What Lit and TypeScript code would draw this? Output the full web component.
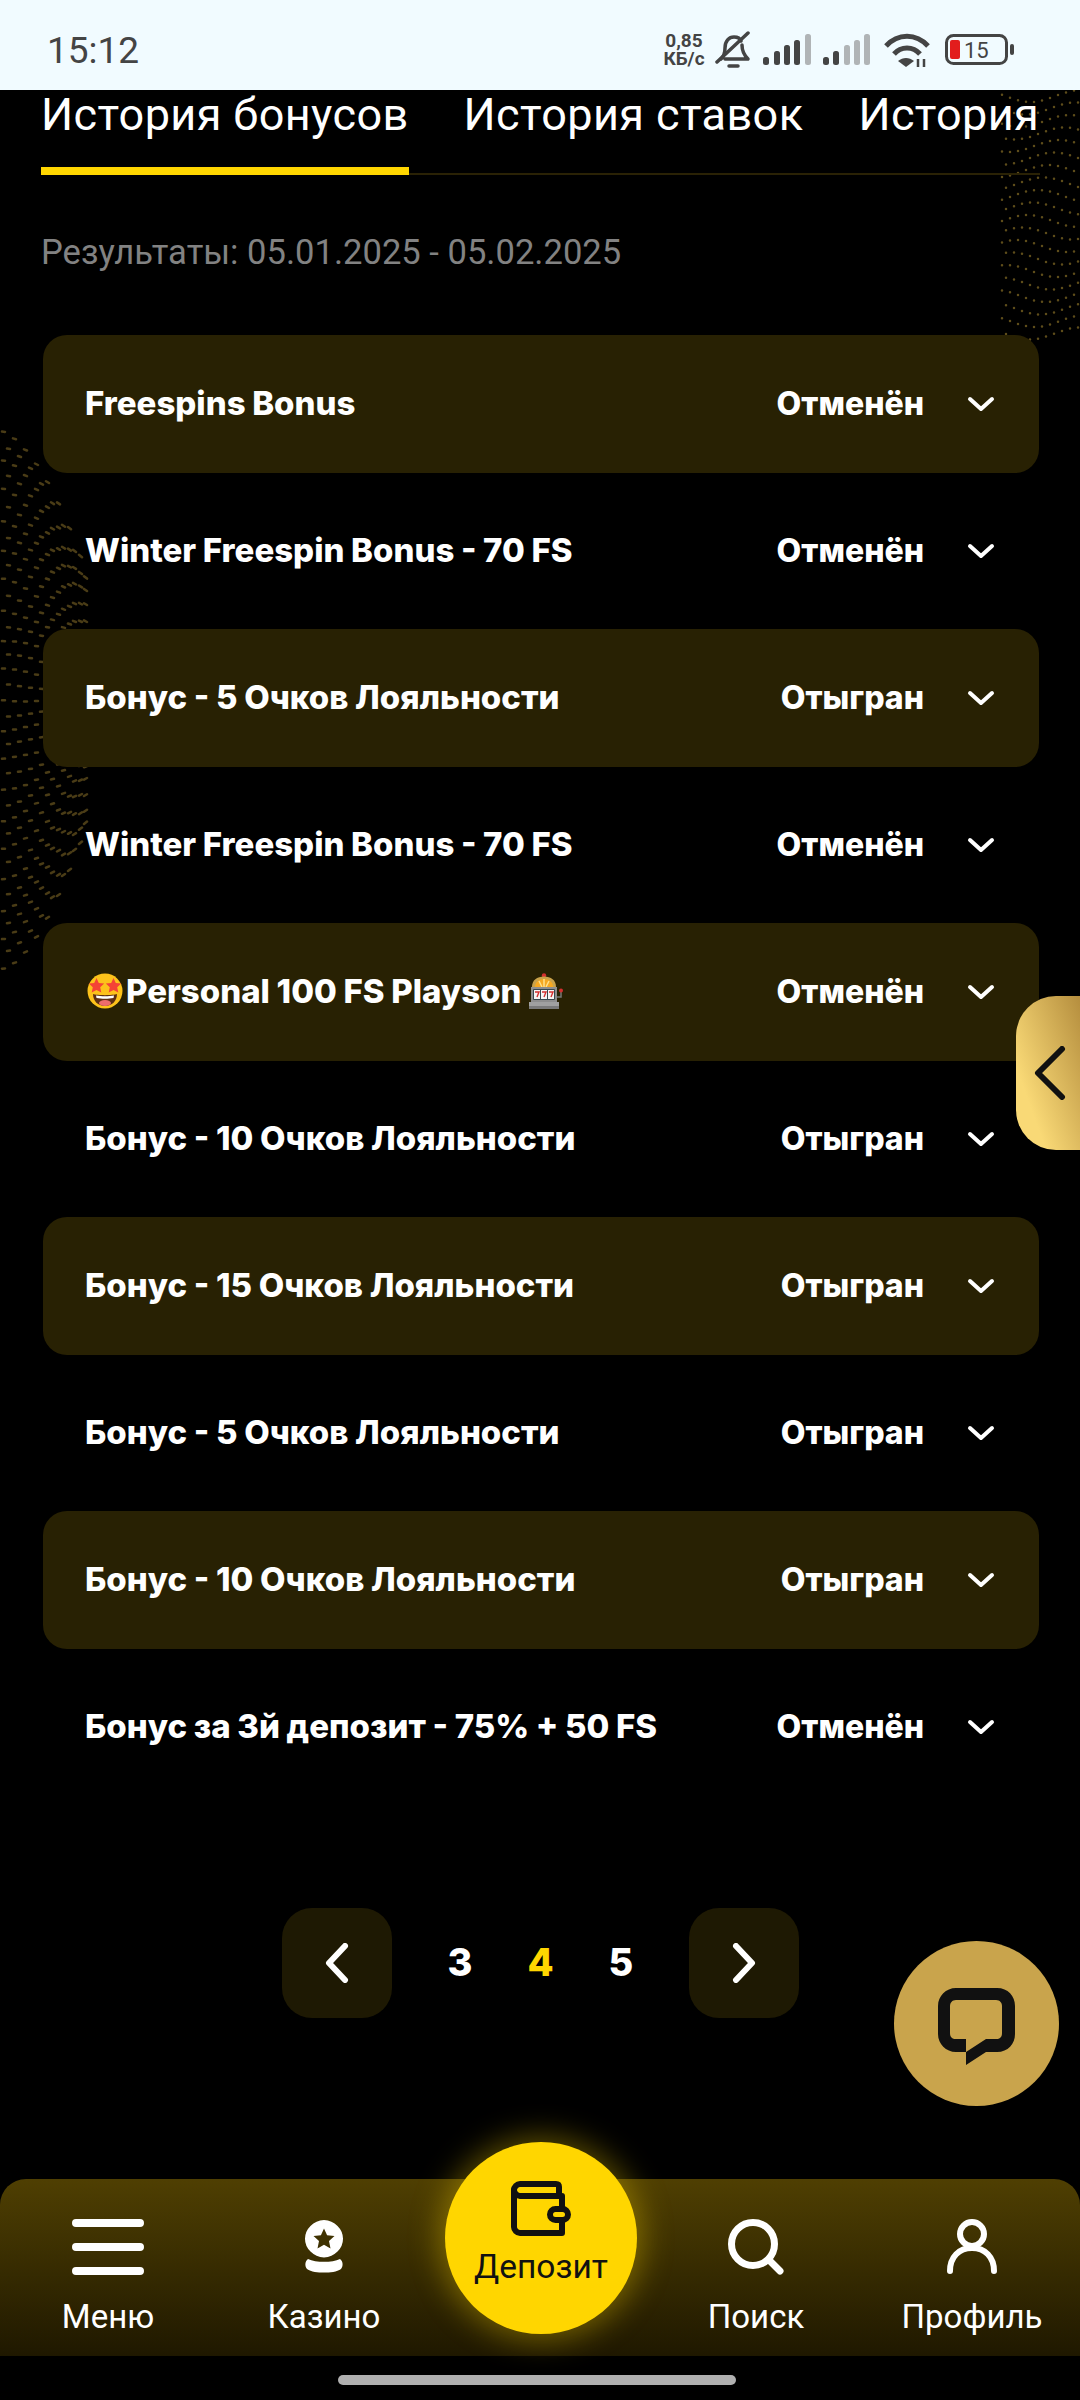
import { LitElement, html, css, svg } from "lit";
import { customElement } from "lit/decorators.js";

type Row = { title: string; status: string; emoji?: boolean };

const rows: Row[] = [
    { title: "Freespins Bonus", status: "Отменён" },
    { title: "Winter Freespin Bonus - 70 FS", status: "Отменён" },
    { title: "Бонус - 5 Очков Лояльности", status: "Отыгран" },
    { title: "Winter Freespin Bonus - 70 FS", status: "Отменён" },
    { title: "Personal 100 FS Playson", status: "Отменён", emoji: true },
    { title: "Бонус - 10 Очков Лояльности", status: "Отыгран" },
    { title: "Бонус - 15 Очков Лояльности", status: "Отыгран" },
    { title: "Бонус - 5 Очков Лояльности", status: "Отыгран" },
    { title: "Бонус - 10 Очков Лояльности", status: "Отыгран" },
    { title: "Бонус за 3й депозит - 75% + 50 FS", status: "Отменён" },
];

// dotted sphere on the left edge: rows fan out at x=0 and pinch towards x=85
function leftDots() {
    let d = "";
    for (let k = -18; k <= 18; k++) {
        const t = k / 18;
        for (let x = 2 + (k & 1) * 5; x < 86; x += 11) {
            const y0 = 700 + t * 270;
            const y = y0 - t * Math.pow(x / 85, 1.6) * 140 + Math.sin(x / 14 + k) * 1.5;
            const slope = -t * 1.6 * Math.pow(x / 85, 0.6) * 1.6;
            d += `M${x} ${y.toFixed(1)}l3 ${slope.toFixed(1)}`;
        }
    }
    return d;
}

// wavy dotted rows on the right edge under the tabs
function rightDots() {
    let d = "";
    for (let k = 0; k < 20; k++) {
        for (let x = 1002 + (k & 1) * 4; x < 1080; x += 8) {
            const y = 96 + k * 12.5 + Math.sin(x / 16 + k / 3) * 6;
            d += `M${x} ${y.toFixed(1)}h.01`;
        }
    }
    return d;
}

const chevronDown = html`<svg class="chev" width="28" height="16" viewBox="0 0 28 16">
    <path d="M3 3l11 10L25 3" fill="none" stroke="#fff" stroke-width="4" stroke-linecap="round" stroke-linejoin="round" />
</svg>`;

const faceEmoji = html`<svg class="emoji face" width="38" height="36" viewBox="0 0 38 36">
    <circle cx="19" cy="18" r="17.5" fill="#fcc21b" />
    <path d="M7 21c4 1.500 20 1.500 24 0 0 7-5 12-12 12S7 28 7 21z" fill="#5d2f12" />
    <path d="M10 22.500c5 1 13 1 18 0l-.5 2.500c-5 1-12 1-17 0z" fill="#fff" />
    <ellipse cx="19" cy="30" rx="6" ry="3" fill="#ed6c6c" />
    <path d="M10.500 5l2.300 5 5.400.6-4 3.700 1.100 5.300-4.800-2.700-4.800 2.700 1.100-5.300-4-3.700 5.400-.6z" fill="#f44336" />
    <path d="M27.500 5l2.300 5 5.400.6-4 3.700 1.100 5.300-4.800-2.700-4.800 2.700 1.100-5.300-4-3.700 5.400-.6z" fill="#f44336" />
</svg>`;

const slotEmoji = html`<svg class="emoji" width="38" height="37" viewBox="0 0 38 37">
    <circle cx="16" cy="2.500" r="2.200" fill="#d32f2f" />
    <path d="M4 14C4 7 9 3.500 16 3.500S28 7 28 14z" fill="#c9a24a" />
    <path d="M7 14c0-5 4-8 9-8s9 3 9 8z" fill="#f6a821" />
    <path d="M16 6v8M11 8l3 6M21 8l-3 6" stroke="#ffe08a" stroke-width="1.500" />
    <rect x="3" y="14" width="26" height="15" fill="#8e8e8e" />
    <rect x="5" y="16" width="22" height="11" rx="1" fill="#37474f" />
    <rect x="6" y="17" width="6" height="9" fill="#f5f5f5" />
    <rect x="13" y="17" width="6" height="9" fill="#f5f5f5" />
    <rect x="20" y="17" width="6" height="9" fill="#f5f5f5" />
    <path d="M7 19h4l-2 5M14 19h4l-2 5M21 19h4l-2 5" fill="none" stroke="#d32f2f" stroke-width="1.400" />
    <path d="M29 24h4v-5" fill="none" stroke="#777" stroke-width="1.500" />
    <circle cx="33" cy="17.500" r="2" fill="#d32f2f" />
    <rect x="1" y="29" width="30" height="7" fill="#a0a0a0" />
    <rect x="1" y="33" width="30" height="3" fill="#7a7a7a" />
</svg>`;

@customElement("app-root")
export class AppRoot extends LitElement {
    static styles = css`
        :host {
            display: block;
            font-family: Roboto, sans-serif;
            color: #fff;
        }

        .page {
            position: relative;
            display: flex;
            flex-direction: column;
            height: 2400px;
            background: #000;
            overflow: hidden;
        }

        .dots {
            position: absolute;
            left: 0;
            top: 0;
        }

        .statusbar {
            position: relative;
            display: flex;
            align-items: center;
            justify-content: space-between;
            height: 90px;
            flex: none;
            padding: 0 66px 0 47px;
            box-sizing: border-box;
            background: #f1fbff;
            color: #444;
        }

        .time {
            font-size: 37px;
            line-height: 1;
            margin-top: 10px;
        }

        .sys {
            display: flex;
            align-items: center;
            margin-top: 10px;
        }

        .speed {
            font-size: 19px;
            font-weight: 700;
            line-height: 18px;
            text-align: center;
            width: 42px;
            margin-right: 10px;
        }

        .sys svg {
            display: block;
        }

        .tabs {
            position: relative;
            display: flex;
            gap: 55px;
            margin: 0 40px 0 41px;
            height: 85px;
            flex: none;
            font-size: 45px;
            letter-spacing: 0.4px;
            line-height: 50px;
            white-space: nowrap;
            box-shadow: inset 0 -2px 0 #2a2205;
        }

        .tab {
            flex: none;
            height: 85px;
            box-sizing: border-box;
        }

        .tab.active {
            border-bottom: 8px solid #ffd600;
        }

        .results {
            position: relative;
            margin: 57px 0 0 41px;
            font-size: 34.6px;
            line-height: 40px;
            color: #828282;
        }

        .list {
            position: relative;
            display: grid;
            grid-auto-rows: 138px;
            row-gap: 9px;
            margin: 63px 41px 0 43px;
        }

        .row {
            display: flex;
            align-items: center;
            padding: 0 44px 2px 42px;
            box-sizing: border-box;
            border-radius: 24px;
            font-family: Inter, sans-serif;
            font-weight: 800;
            font-size: 32px;
        }

        .row:nth-child(odd) {
            background: #282103;
        }

        .title {
            display: flex;
            align-items: center;
            flex: 1;
            min-width: 0;
            font-size: 33px;
            word-spacing: -0.6px;
        }

        .emoji {
            flex: none;
        }

        .face {
            margin: 0 2px 0 1px;
        }

        .status {
            margin-right: 43px;
        }

        .chev {
            display: block;
            margin-top: 2px;
        }

        .pager {
            position: relative;
            display: flex;
            align-items: center;
            margin: 112px 0 0 282px;
        }

        .page-btn {
            display: flex;
            align-items: center;
            justify-content: center;
            width: 110px;
            height: 110px;
            border-radius: 30px;
            background: #1e1903;
        }

        .nums {
            display: grid;
            grid-template-columns: 81px 80px 81px;
            justify-items: center;
            width: 297px;
            justify-content: center;
            padding-bottom: 3px;
            font-family: Inter, sans-serif;
            font-weight: 800;
            font-size: 38px;
        }

        .nums .on {
            color: #ffd600;
        }

        .nav {
            position: relative;
            display: grid;
            grid-template-columns: repeat(5, 216px);
            height: 177px;
            margin-top: auto;
            flex: none;
            border-radius: 26px 26px 0 0;
            background: linear-gradient(#4f3f02, #1f1800);
        }

        .item {
            display: flex;
            flex-direction: column;
            align-items: center;
            padding-top: 40px;
            box-sizing: border-box;
            font-size: 33px;
            line-height: 40px;
        }

        .item svg {
            display: block;
            height: 56px;
            margin-bottom: 22px;
        }

        .home {
            display: flex;
            justify-content: center;
            align-items: center;
            height: 44px;
            flex: none;
        }

        .home i {
            display: block;
            width: 398px;
            height: 10px;
            margin-top: 4px;
            margin-left: -6px;
            border-radius: 5px;
            background: #b0b0b0;
        }

        .deposit {
            position: absolute;
            left: 445px;
            top: -37px;
            display: flex;
            flex-direction: column;
            align-items: center;
            width: 192px;
            height: 192px;
            padding-top: 39px;
            box-sizing: border-box;
            border-radius: 50%;
            background: #ffd600;
            box-shadow: 0 0 30px 6px rgba(255, 214, 0, 0.35);
            color: #111;
            font-size: 33.5px;
            line-height: 40px;
        }

        .deposit svg {
            display: block;
            margin-bottom: 11px;
        }

        .chat {
            position: absolute;
            left: 894px;
            top: 1941px;
            display: flex;
            align-items: center;
            justify-content: center;
            width: 165px;
            height: 165px;
            border-radius: 50%;
            background: #c9a44c;
        }

        .chat svg {
            margin-top: 5px;
        }

        .side {
            position: absolute;
            right: 0;
            top: 996px;
            display: flex;
            align-items: center;
            width: 64px;
            height: 154px;
            padding-left: 18px;
            box-sizing: border-box;
            border-radius: 40px 0 0 40px;
            background: linear-gradient(70deg, #f9d976 25%, #b58e3e);
        }
    `;

    render() {
        return html`
            <div class="page">
                <svg class="dots" width="1080" height="1000" fill="none" stroke-linecap="round">
                    ${svg`<path d=${leftDots()} stroke="#4a3c16" stroke-width="2.500" />`}
                    ${svg`<path d=${rightDots()} stroke="#5e4d1a" stroke-width="2.500" />`}
                </svg>
                ${this.renderStatusBar()}
                <div class="tabs">
                    <div class="tab active">История бонусов</div>
                    <div class="tab">История ставок</div>
                    <div class="tab">История</div>
                </div>
                <div class="results">Результаты: 05.01.2025 - 05.02.2025</div>
                <div class="list">
                    ${rows.map(
                        (r) => html`
                            <div class="row">
                                <div class="title">
                                    ${r.emoji ? faceEmoji : ""}${r.title}${r.emoji
                                        ? html`&nbsp;${slotEmoji}`
                                        : ""}
                                </div>
                                <div class="status">${r.status}</div>
                                ${chevronDown}
                            </div>
                        `
                    )}
                </div>
                <div class="pager">
                    <div class="page-btn">
                        <svg width="26" height="40" viewBox="0 0 26 40">
                            <path d="M21 3L5 20l16 17" fill="none" stroke="#fff" stroke-width="6" stroke-linecap="round" stroke-linejoin="round" />
                        </svg>
                    </div>
                    <div class="nums"><span>3</span><span class="on">4</span><span>5</span></div>
                    <div class="page-btn">
                        <svg width="26" height="40" viewBox="0 0 26 40">
                            <path d="M5 3l16 17L5 37" fill="none" stroke="#fff" stroke-width="6" stroke-linecap="round" stroke-linejoin="round" />
                        </svg>
                    </div>
                </div>
                ${this.renderNav()}
                <div class="home"><i></i></div>
                <div class="chat">
                    <svg width="77" height="77" viewBox="0 0 77 77">
                        <path d="M18 0h41c11 0 18 8 18 18v28c0 10-7 18-18 18H48L28 77V64H18C8 64 0 56 0 46V18C0 8 8 0 18 0z" fill="#111" />
                        <path d="M18 12h40c4 0 6 3 6 6v27c0 4-2 6-6 6H48L28 64V51H18c-4 0-6-2-6-6V18c0-3 2-6 6-6z" fill="#c9a44c" />
                    </svg>
                </div>
                <div class="side">
                    <svg width="32" height="54" viewBox="0 0 32 54">
                        <path d="M28 3L4 27l24 24" fill="none" stroke="#111" stroke-width="6" stroke-linecap="round" stroke-linejoin="round" />
                    </svg>
                </div>
            </div>
        `;
    }

    renderStatusBar() {
        return html`
            <div class="statusbar">
                <div class="time">15:12</div>
                <div class="sys">
                    <div class="speed">0,85<br />КБ/с</div>
                    <svg width="36" height="38" viewBox="0 0 36 38" fill="none" stroke="#444" stroke-width="3.500" stroke-linecap="round" stroke-linejoin="round">
                        <path d="M6 28c3-3 4-6 4-11 0-7 4-11 9-11 3 0 6 1 7 4M27 14c0 5 2 10 6 14H10" />
                        <path d="M2 31L33 2" />
                        <path d="M14 35h9" />
                    </svg>
                    <svg style="margin-left:12px" width="48" height="32" viewBox="0 0 48 32">
                        <rect x="0" y="23" width="6" height="8" rx="2.500" fill="#444" />
                        <rect x="11" y="17" width="6" height="14" rx="2.500" fill="#444" />
                        <rect x="21" y="11" width="6" height="20" rx="2.500" fill="#444" />
                        <rect x="31" y="6" width="6" height="25" rx="2.500" fill="#444" />
                        <rect x="42" y="0" width="6" height="31" rx="2.500" fill="#b0b4b6" />
                    </svg>
                    <svg style="margin-left:12px" width="47" height="32" viewBox="0 0 47 32">
                        <rect x="0" y="23" width="6" height="8" rx="2.500" fill="#444" />
                        <rect x="10" y="17" width="6" height="14" rx="2.500" fill="#444" />
                        <rect x="21" y="11" width="6" height="20" rx="2.500" fill="#b0b4b6" />
                        <rect x="31" y="6" width="6" height="25" rx="2.500" fill="#b0b4b6" />
                        <rect x="41" y="0" width="6" height="31" rx="2.500" fill="#b0b4b6" />
                    </svg>
                    <svg style="margin-left:14px" width="46" height="34" viewBox="0 0 46 34" fill="none" stroke="#444" stroke-width="5">
                        <path d="M2 13C14 0 32 0 44 13" />
                        <path d="M10 21C17 13 29 13 36 21" />
                        <path d="M22 34l-8-6c5-4 11-4 16 0z" fill="#444" stroke="none" />
                        <path d="M34 26v8M40 26v8" stroke-width="2.500" />
                    </svg>
                    <svg style="margin-left:15px" width="69" height="32" viewBox="0 0 69 32">
                        <rect x="1.500" y="1.500" width="60" height="28" rx="7" fill="none" stroke="#444" stroke-width="3" />
                        <rect x="5" y="6" width="10" height="19" rx="2" fill="#e21d1d" />
                        <rect x="65" y="10" width="4" height="11" rx="2" fill="#444" />
                        <text x="19" y="24" font-family="Roboto, sans-serif" font-size="22" fill="#444">15</text>
                    </svg>
                </div>
            </div>
        `;
    }

    renderNav() {
        return html`
            <div class="nav">
                <div class="item">
                    <svg width="72" height="56" viewBox="0 0 72 56">
                        <path d="M4 4h64M4 28h64M4 52h64" stroke="#fff" stroke-width="8" stroke-linecap="round" />
                    </svg>
                    Меню
                </div>
                <div class="item">
                    <svg width="42" height="56" viewBox="0 0 42 56">
                        <path fill-rule="evenodd" d="M21 1a20.500 18.800 0 0 1 0 37.500A20.500 18.800 0 0 1 21 1zM21 9.500l3.100 6.800 7.400.8-5.500 5 1.500 7.300-6.500-3.700-6.500 3.700 1.500-7.300-5.500-5 7.400-.8z" fill="#fff" />
                        <path d="M5 40c4 2 10 2.800 16 2.800S33 42 37 40c3 2 3.500 7 1 10-4 3-11 3.500-17 3.500S8 53 4 50c-2.500-3-2-8 1-10z" fill="#fff" />
                    </svg>
                    Казино
                </div>
                <div class="item"></div>
                <div class="item">
                    <svg width="56" height="56" viewBox="0 0 56 56" fill="none" stroke="#fff" stroke-linecap="round">
                        <circle cx="25" cy="25" r="21.500" stroke-width="7" />
                        <path d="M41 41l11 11" stroke-width="7" />
                    </svg>
                    Поиск
                </div>
                <div class="item">
                    <svg width="50" height="56" viewBox="0 0 50 56" fill="none" stroke="#fff" stroke-width="6" stroke-linecap="round">
                        <circle cx="25" cy="15" r="12" />
                        <path d="M3 52c0-14 9-23 22-23s22 9 22 23" />
                    </svg>
                    Профиль
                </div>
                <div class="deposit">
                    <svg width="60" height="55" viewBox="0 0 60 55" fill="none" stroke="#111" stroke-width="6" stroke-linejoin="round">
                        <path d="M3 9c0-3 3-6 6-6h36c2 0 3 1 3 3v9" />
                        <path d="M3 9v37c0 3 3 6 6 6h42V15H9c-3 0-6-3-6-6z" />
                        <rect x="39" y="28" width="18" height="11" rx="5.500" fill="#ffd600" />
                    </svg>
                    Депозит
                </div>
            </div>
        `;
    }
}
